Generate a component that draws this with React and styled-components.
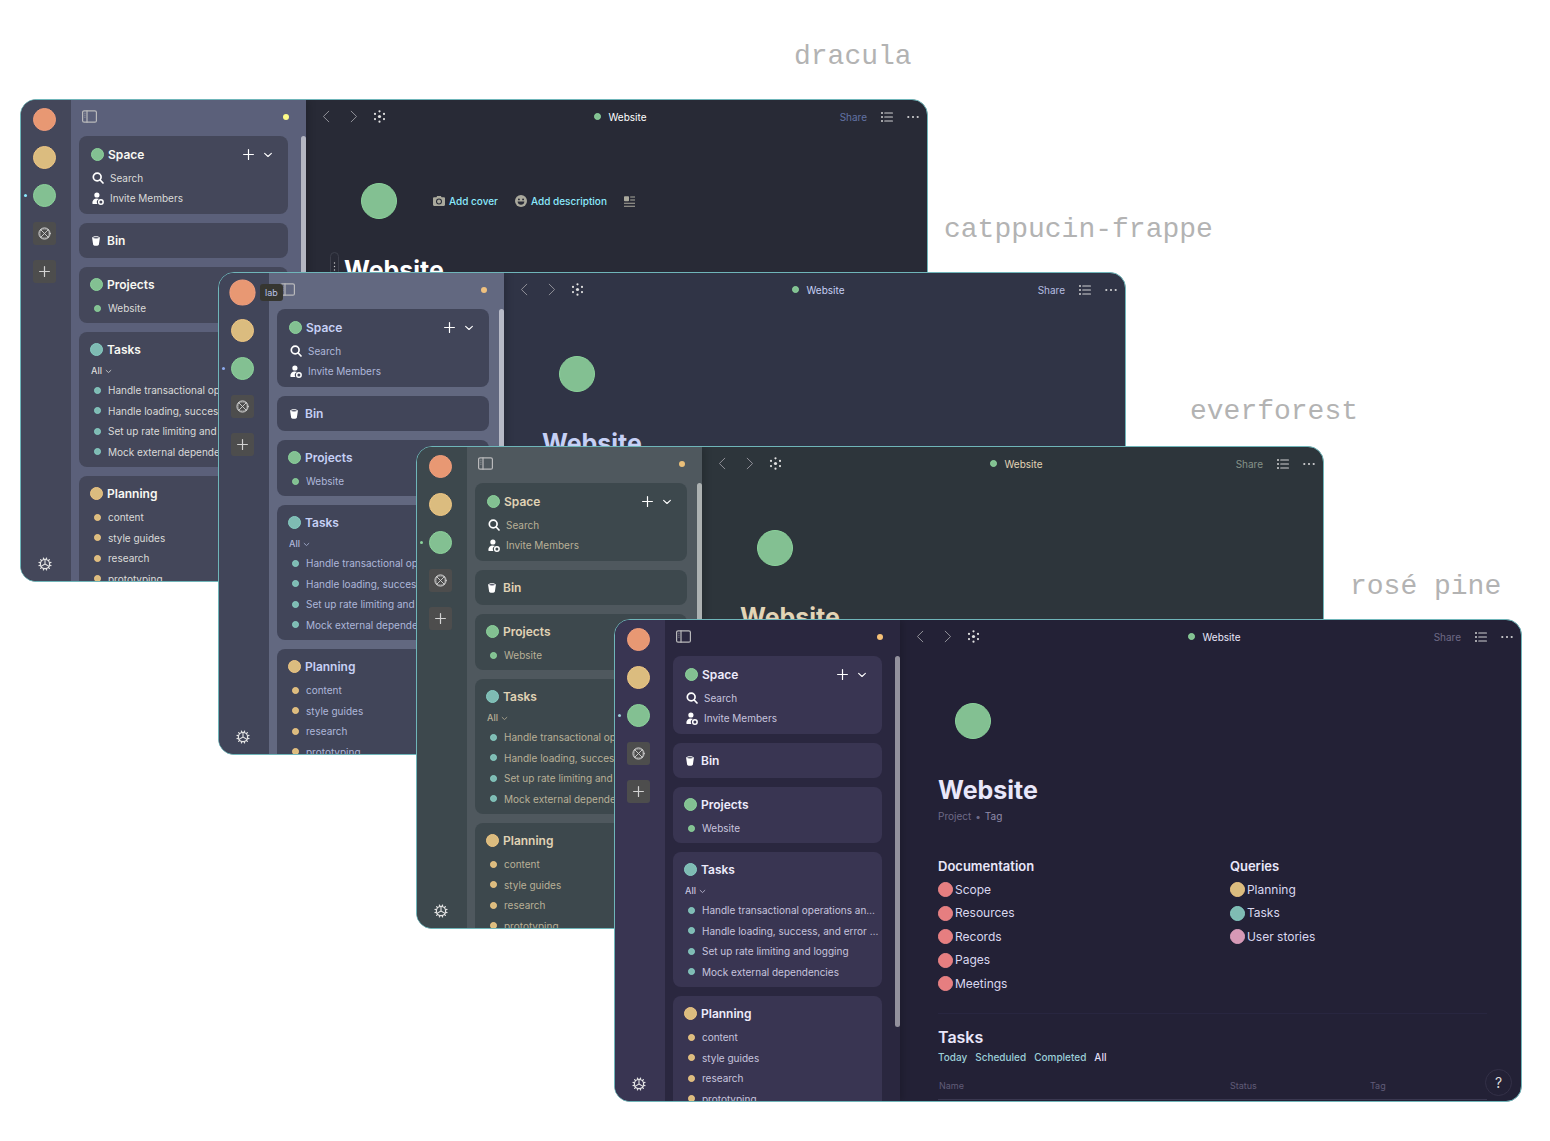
import React from "react";
import styled, { createGlobalStyle, ThemeProvider, css } from "styled-components";

const Global = createGlobalStyle`
  *, *::before, *::after { box-sizing: border-box; }
  body { margin: 0; background: #fff; font-family: Inter, "Liberation Sans", sans-serif; }
  button { font: inherit; color: inherit; background: none; border: 0; padding: 0; cursor: pointer; }
  a { color: inherit; text-decoration: none; }
  h2, h3, ul { margin: 0; padding: 0; }
  ul { list-style: none; }
  svg { display: block; flex: none; }
`;

const hues = {
  orange: ["#e89873", "#f09d7c"],
  yellow: ["#dbbc7f", "#efc683"],
  green: ["#83c092", "#8bd39b"],
  teal: ["#7fbbb3", "#86cdc3"],
  red: ["#e67e80", "#ee8688"],
  pink: ["#d699b6", "#dfa0be"],
};

const themes = {
  dracula: {
    name: "dracula", surface: "#44475a", side: "#5b607a", main: "#282a36", gutter: 18,
    title: "#f8f8f2", text: "#dbdbd9", heading: "#ffffff", share: "#6272a4",
    accent: "#8be9fd", status: "#fdfb88", thumb: "#b4b6c2",
  },
  frappe: {
    name: "catppucin-frappe", surface: "#414559", side: "#626880", main: "#303446", gutter: 15,
    title: "#c6d0f5", text: "#aeb7da", heading: "#c6d0f5", share: "#b5bde0",
    accent: "#8caaee", status: "#efc17f", thumb: "#b7bac7",
  },
  everforest: {
    name: "everforest", surface: "#3d484d", side: "#4f585e", main: "#2d353b", gutter: 15,
    title: "#e0d3b5", text: "#b9b097", heading: "#e2d4b6", share: "#859289",
    accent: "#8bd39b", status: "#eabf79", thumb: "#adb2b2",
  },
  rose: {
    name: "rosé pine", surface: "#393552", side: "#2a273f", main: "#232136", gutter: 18,
    title: "#edebfb", text: "#c7c4de", heading: "#e9e7fa", share: "#6e6a86",
    accent: "#9ccfd8", status: "#f6c177", thumb: "#93919d",
  },
};

const Desktop = styled.main`
  position: relative;
  min-height: 1141px;
  overflow: hidden;
`;

const ThemeName = styled.p`
  position: absolute;
  left: ${(p) => p.$x}px;
  top: ${(p) => p.$y}px;
  margin: 0;
  font: 28px/32px "Liberation Mono", monospace;
  color: #b3b3b3;
`;

const Frame = styled.section`
  position: absolute;
  isolation: isolate;
  left: ${(p) => p.$x}px;
  top: ${(p) => p.$y}px;
  width: calc(100% - 642px);
  height: 483px;
  display: grid;
  grid-template-columns: 50px 235px 1fr;
  overflow: hidden;
  border: 1px solid #6fb5b9;
  border-radius: 16px;
  background: ${(p) => p.theme.main};
  font-size: 10px;
  line-height: 20px;
  color: ${(p) => p.theme.text};
`;

const Disc = styled.span`
  flex: none;
  display: block;
  width: ${(p) => p.$size}px;
  height: ${(p) => p.$size}px;
  border-radius: 50%;
  background: ${(p) => hues[p.$hue][0]};
  border: 1px solid ${(p) => hues[p.$hue][1]};
`;

const Rail = styled.nav`
  display: flex;
  flex-direction: column;
  gap: 15px;
  padding: 8px 0 10px 12px;
  background: ${(p) => p.theme.surface};
`;

const RailItem = styled.button`
  position: relative;
  width: 23px;
  height: 23px;
  display: grid;
  place-items: center;
  border-radius: 3px;
  color: #d2d2d2;
  ${(p) => p.$boxed && css`background: #4d4d4d;`}
  ${(p) => p.$raised && css`${Disc} { transform: scale(1.14); }`}
  ${(p) => p.$active && css`
    &::before {
      content: "";
      position: absolute;
      left: -9px;
      top: 10px;
      width: 3px;
      height: 3px;
      border-radius: 50%;
      background: ${p.theme.accent};
    }
  `}
`;

const RailEnd = styled(RailItem)`
  margin-top: auto;
  height: 14px;
  color: #e4e4e4;
`;

const Tooltip = styled.span`
  position: absolute;
  z-index: 2;
  left: 41px;
  top: 11px;
  padding: 0 5px;
  border-radius: 3px;
  background: #363631;
  color: #b9c2e6;
  font-size: 9px;
  line-height: 17px;
`;

const Side = styled.aside`
  position: relative;
  z-index: 1;
  display: flex;
  flex-direction: column;
  min-height: 0;
  background: ${(p) => p.theme.side};
  box-shadow: 2px 0 8px rgba(0, 0, 0, 0.2);
  clip-path: inset(0 -12px 0 0);
`;

const SideBar = styled.header`
  flex: none;
  display: flex;
  justify-content: space-between;
  align-items: center;
  height: 33px;
  margin-bottom: 3px;
  padding: 0 17px 0 11px;
  color: #b9b9bb;
`;

const Status = styled.span`
  width: 6px;
  height: 6px;
  border-radius: 50%;
  background: ${(p) => p.theme.status};
`;

const Scroller = styled.div`
  position: relative;
  flex: 1;
  min-height: 0;
  overflow: hidden;
  display: flex;
  flex-direction: column;
  gap: 9px;
  padding: 0 ${(p) => p.theme.gutter}px 0 8px;
`;

const Thumb = styled.div`
  position: absolute;
  right: 0;
  top: 0;
  width: 5px;
  height: 371px;
  border-radius: 3px;
  background: ${(p) => p.theme.thumb};
`;

const Card = styled.section`
  flex: none;
  padding: 7px 10px 5px 11px;
  border-radius: 8px;
  background: ${(p) => p.theme.surface};
`;

const SpaceCard = styled(Card)`
  padding: 8px 15px 5px 12px;
`;

const BinCard = styled(Card)`
  padding: 7px 10px 7px 12px;
`;

const CardHead = styled.div`
  display: flex;
  align-items: center;
  height: 21px;
  gap: ${(p) => p.$gap || 4}px;
`;

const CardTitle = styled.h3`
  font-size: 12px;
  line-height: 21px;
  font-weight: 600;
  color: ${(p) => p.theme.title};
`;

const HeadTools = styled.div`
  display: flex;
  align-items: center;
  gap: 9px;
  margin-left: auto;
  color: #fff;
`;

const Filter = styled.button`
  display: flex;
  align-items: center;
  gap: 3px;
  height: 16px;
  margin: 3px 0 1px 1px;
  font-size: 9px;
  font-weight: 500;
  line-height: 16px;
`;

const Items = styled.ul`
  display: grid;
  grid-auto-rows: 20px 21px;
  margin-top: ${(p) => (p.$flush ? 0 : 3)}px;
`;

const Item = styled.li`
  display: flex;
  align-items: center;
  gap: 7px;
  padding-left: 4px;
  white-space: nowrap;
`;

const Action = styled.button`
  display: flex;
  align-items: center;
  gap: 6px;
  padding-left: 1px;
  svg { color: #fff; }
`;

const Main = styled.div`
  min-width: 0;
  display: flex;
  flex-direction: column;
`;

const TopBar = styled.header`
  display: grid;
  grid-template-columns: 1fr auto 1fr;
  align-items: center;
  height: 33px;
  padding: 0 8px 0 16px;
`;

const NavTools = styled.div`
  display: flex;
  align-items: center;
  gap: 20px;
  color: #8f8f97;
  button:last-child { color: #e2e2e2; margin-left: -5px; }
`;

const Crumb = styled.a`
  display: flex;
  align-items: center;
  gap: 7px;
  color: ${(p) => p.theme.heading};
`;

const PageTools = styled.div`
  display: flex;
  justify-content: flex-end;
  align-items: center;
  gap: 14px;
  color: #d0d0d2;
`;

const Share = styled.button`
  color: ${(p) => p.theme.share};
`;

const Page = styled.article`
  padding: 50px 34px 0 38px;
`;

const IconRow = styled.div`
  display: flex;
  align-items: center;
  height: 36px;
  padding-left: 17px;
  color: #aaa99d;
`;

const CoverTools = styled.div`
  display: flex;
  align-items: center;
  gap: 17px;
  margin-left: 36px;
`;

const CoverButton = styled.button`
  display: flex;
  align-items: center;
  gap: 4px;
  font-weight: 500;
  span { color: ${(p) => p.theme.accent}; }
`;

const TitleRow = styled.div`
  position: relative;
  margin-top: 35px;
`;

const Grip = styled.button`
  position: absolute;
  left: -14px;
  top: -2px;
  width: 9px;
  height: 32px;
  display: grid;
  place-items: center;
  border: 1px solid #3d3f4b;
  border-radius: 5px;
  color: #c8c8c8;
`;

const Title = styled.h2`
  font-size: 25px;
  line-height: 32px;
  font-weight: 700;
  color: ${(p) => p.theme.heading};
`;

const Meta = styled.p`
  display: flex;
  gap: 4px;
  margin: 2px 0 32px;
  line-height: 16px;
  color: #6e6a86;
  a { color: #908caa; }
`;

const Columns = styled.div`
  display: grid;
  grid-template-columns: 53fr 47fr;
  column-gap: 2px;
  padding-bottom: 18px;
  border-bottom: 1px solid #282640;
`;

const ColumnTitle = styled.h3`
  margin-bottom: 2px;
  font-size: 13px;
  line-height: 20px;
  font-weight: 600;
  color: ${(p) => p.theme.heading};
`;

const Links = styled.ul`
  display: grid;
  grid-auto-rows: 23px 24px;
`;

const PageLink = styled.a`
  display: flex;
  align-items: center;
  gap: 2px;
  height: 100%;
  font-size: 12px;
  color: #dad8ef;
`;

const SectionTitle = styled.h3`
  margin-top: 12px;
  font-size: 16px;
  line-height: 22px;
  font-weight: 600;
  color: ${(p) => p.theme.heading};
`;

const Tabs = styled.div`
  display: flex;
  gap: 8px;
  margin: 1px 0 8px;
  line-height: 16px;
`;

const Tab = styled.button`
  font-weight: 500;
  color: ${(p) => (p.$current ? "#e0def4" : p.theme.accent)};
`;

const Table = styled.table`
  width: 100%;
  table-layout: fixed;
  border-collapse: collapse;
  th {
    height: 26px;
    padding: 0 0 0 1px;
    border-bottom: 1px solid #3a3850;
    text-align: left;
    font-size: 9px;
    font-weight: 400;
    line-height: 24px;
    color: #605c78;
  }
  th:nth-child(1) { width: 53%; }
  th:nth-child(2) { width: 140px; }
`;

const Help = styled.button`
  position: absolute;
  right: 9px;
  bottom: 5px;
  width: 27px;
  height: 27px;
  border: 1px solid #343148;
  border-radius: 50%;
  font-size: 14px;
  color: #dcdcdc;
`;

const stroke = { fill: "none", stroke: "currentColor", strokeLinecap: "round", strokeLinejoin: "round" };

const PanelIcon = () => (
  <svg width="15" height="13" viewBox="0 0 15 13" {...stroke} strokeWidth="1.2">
    <rect x="0.6" y="0.8" width="13.8" height="11.4" rx="1.5" />
    <path d="M5 0.8v11.4" />
    <path d="M2.3 3.2h1M2.3 5.2h1M2.3 7.2h1" strokeWidth=".5" />
  </svg>
);
const PlusIcon = ({ size = 11 }) => (
  <svg width={size} height={size} viewBox="0 0 11 11" {...stroke} strokeWidth="1.2"><path d="M5.5 .6v9.8M.6 5.5h9.8" /></svg>
);
const ChevronIcon = ({ size = 8 }) => (
  <svg width={size} height={size} viewBox="0 0 8 8" {...stroke} strokeWidth=".9"><path d="M1.3 2.7 4 5.2 6.7 2.7" /></svg>
);
const GraphIcon = () => (
  <svg width="13" height="13" viewBox="0 0 13 13" {...stroke} strokeWidth="1">
    <circle cx="6.5" cy="6.5" r="5.6" />
    <path d="M2.6 2.6l7.8 7.8M10.4 2.6l-7.8 7.8" strokeWidth=".9" />
    <path d="M2.6 2.6C5 1.8 8 1.8 10.4 2.6C11.2 5 11.2 8 10.4 10.4C8 11.2 5 11.2 2.6 10.4C1.8 8 1.8 5 2.6 2.6" strokeWidth=".6" />
  </svg>
);
const GearIcon = () => (
  <svg width="14" height="14" viewBox="0 0 14 14" {...stroke}>
    <circle cx="7" cy="7" r="4.6" strokeWidth="1.2" />
    <path d="M7 7V2.4M7 7l-4 2.4M7 7l4 2.4" strokeWidth="1.1" />
    {Array.from({ length: 12 }, (_, i) => (
      <path key={i} d="M7 .8v1.2" strokeWidth="1.2" transform={`rotate(${i * 30 + 15} 7 7)`} />
    ))}
  </svg>
);
const SearchIcon = () => (
  <svg width="12" height="12" viewBox="0 0 12 12" {...stroke} strokeWidth="1.7"><circle cx="5.2" cy="5" r="3.9" /><path d="M8.2 8 11 11" /></svg>
);
const InviteIcon = () => (
  <svg width="12" height="13" viewBox="0 0 12 13" fill="currentColor">
    <circle cx="4.9" cy="3" r="2.6" />
    <path d="M.3 11.2c0-2.8 1.8-4.6 4.5-4.6.9 0 1.6.2 2.2.5A3.6 3.6 0 0 0 5.3 12H1.2c-.6 0-.9-.3-.9-.8z" />
    <path fillRule="evenodd" d="M8.9 6.900a3 3 0 1 1 0 6 3 3 0 0 1 0-6zm0 1.500a1.500 1.500 0 1 0 0 3 1.500 1.500 0 0 0 0-3z" />
  </svg>
);
const BinIcon = () => (
  <svg width="8" height="10" viewBox="0 0 8 10">
    <path d="M.1 1.700C.1.800 1.900.2 4 .2s3.900.6 3.900 1.500L6.900 8.500c-.1.800-1.300 1.300-2.900 1.300s-2.800-.5-2.900-1.300z" fill="#fff" />
    <ellipse cx="4" cy="1.800" rx="2.900" ry=".8" fill="#55586a" />
  </svg>
);
const ArrowIcon = ({ flip }) => (
  <svg width="8" height="13" viewBox="0 0 8 13" {...stroke} strokeWidth="1"><path d={flip ? "M1.2 1.2 6.6 6.5 1.2 11.8" : "M6.8 1.2 1.4 6.5 6.8 11.8"} /></svg>
);
const DotsIcon = () => (
  <svg width="13" height="13" viewBox="0 0 13 13" fill="currentColor">
    {[[6.5, 1.3], [6.5, 11.7], [2, 3.9], [11, 3.9], [2, 9.1], [11, 9.1]].map(([x, y]) => <circle key={`${x}-${y}`} cx={x} cy={y} r="1.1" />)}
    <circle cx="6.5" cy="6.5" r="1.6" />
  </svg>
);
const ListIcon = () => (
  <svg width="12" height="10" viewBox="0 0 12 10" fill="currentColor">
    {[1, 5, 9].map((y) => <g key={y}><circle cx="1" cy={y} r="1" /><rect x="3.2" y={y - 0.55} width="8.8" height="1.1" rx=".5" /></g>)}
  </svg>
);
const MoreIcon = () => (
  <svg width="12" height="4" viewBox="0 0 12 4" fill="currentColor">{[1.3, 6, 10.7].map((x) => <circle key={x} cx={x} cy="2" r="1.1" />)}</svg>
);
const CameraIcon = () => (
  <svg width="12" height="12" viewBox="0 0 12 12" fill="currentColor">
    <path fillRule="evenodd" d="M1.2 2.2h2.2l.8-1.2h3.6l.8 1.2h2.2c.7 0 1.2.5 1.2 1.1v6.5c0 .7-.5 1.2-1.2 1.2H1.2C.5 11 0 10.5 0 9.8V3.3c0-.6.5-1.1 1.2-1.1zM6 3.5a3 3 0 1 0 0 6 3 3 0 0 0 0-6z" />
    <circle cx="6" cy="6.5" r="1.9" />
  </svg>
);
const SmileIcon = () => (
  <svg width="12" height="12" viewBox="0 0 12 12">
    <circle cx="6" cy="6" r="6" fill="currentColor" />
    <g fill="#282a36"><circle cx="3.9" cy="4.4" r=".95" /><circle cx="8.1" cy="4.4" r=".95" /><path d="M2.6 6.5h6.8C9.2 8.6 7.8 9.7 6 9.7S2.8 8.6 2.6 6.5z" /></g>
  </svg>
);
const LayoutIcon = () => (
  <svg width="11" height="11" viewBox="0 0 11 11" fill="currentColor">
    <rect width="5" height="5" rx=".8" y=".3" /><path d="M6.2 .6h4.8v1H6.2zM6.2 3.6h4.8v1H6.2zM0 6.8h11v1H0zM0 9.8h11v1H0z" />
  </svg>
);
const GripIcon = () => (
  <svg width="3" height="13" viewBox="0 0 3 13" fill="currentColor">{[1, 4.5, 8, 11.5].map((y) => <circle key={y} cx="1.5" cy={y} r=".7" />)}</svg>
);

const groups = [
  { title: "Projects", hue: "green", items: ["Website"] },
  {
    title: "Tasks", hue: "teal", filter: "All",
    items: ["Handle transactional operations an…", "Handle loading, success, and error …", "Set up rate limiting and logging", "Mock external dependencies"],
  },
  { title: "Planning", hue: "yellow", items: ["content", "style guides", "research", "prototyping"] },
];

function Sidebar() {
  return (
    <Side>
      <SideBar>
        <button aria-label="Toggle sidebar"><PanelIcon /></button>
        <Status />
      </SideBar>
      <Scroller>
        <SpaceCard>
          <CardHead>
            <Disc $size={13} $hue="green" />
            <CardTitle>Space</CardTitle>
            <HeadTools>
              <button aria-label="New"><PlusIcon /></button>
              <button aria-label="More"><ChevronIcon size={10} /></button>
            </HeadTools>
          </CardHead>
          <Items>
            <li><Action><SearchIcon />Search</Action></li>
            <li><Action><InviteIcon />Invite Members</Action></li>
          </Items>
        </SpaceCard>
        <BinCard>
          <CardHead $gap={7}>
            <Action aria-label="Open bin"><BinIcon /></Action>
            <CardTitle>Bin</CardTitle>
          </CardHead>
        </BinCard>
        {groups.map((g) => (
          <Card key={g.title}>
            <CardHead>
              <Disc $size={13} $hue={g.hue} />
              <CardTitle>{g.title}</CardTitle>
            </CardHead>
            {g.filter && <Filter>{g.filter}<ChevronIcon size={7} /></Filter>}
            <Items $flush={Boolean(g.filter)}>
              {g.items.map((text) => (
                <Item key={text}><Disc $size={7} $hue={g.hue} /><a href="#page">{text}</a></Item>
              ))}
            </Items>
          </Card>
        ))}
        <Thumb />
      </Scroller>
    </Side>
  );
}

function LinkColumn({ title, links }) {
  return (
    <div>
      <ColumnTitle>{title}</ColumnTitle>
      <Links>
        {links.map(([text, hue]) => (
          <li key={text}><PageLink href="#page"><Disc $size={15} $hue={hue} />{text}</PageLink></li>
        ))}
      </Links>
    </div>
  );
}

function Details() {
  return (
    <>
      <Meta>Project <span>•</span> <a href="#tag">Tag</a></Meta>
      <Columns>
        <LinkColumn title="Documentation" links={["Scope", "Resources", "Records", "Pages", "Meetings"].map((t) => [t, "red"])} />
        <LinkColumn title="Queries" links={[["Planning", "yellow"], ["Tasks", "teal"], ["User stories", "pink"]]} />
      </Columns>
      <SectionTitle>Tasks</SectionTitle>
      <Tabs>
        {["Today", "Scheduled", "Completed", "All"].map((t) => <Tab key={t} $current={t === "All"}>{t}</Tab>)}
      </Tabs>
      <Table>
        <thead><tr><th>Name</th><th>Status</th><th>Tag</th></tr></thead>
      </Table>
    </>
  );
}

function AppWindow({ theme, x, y, tooltip, editing, details }) {
  return (
    <ThemeProvider theme={theme}>
      <Frame $x={x} $y={y} aria-label={theme.name}>
        <Rail>
          <RailItem $raised={Boolean(tooltip)} aria-label="lab">
            <Disc $size={23} $hue="orange" />
          </RailItem>
          <RailItem aria-label="Notes"><Disc $size={23} $hue="yellow" /></RailItem>
          <RailItem $active aria-label="Space"><Disc $size={23} $hue="green" /></RailItem>
          <RailItem $boxed aria-label="Graph"><GraphIcon /></RailItem>
          <RailItem $boxed aria-label="Add space"><PlusIcon size={11} /></RailItem>
          <RailEnd aria-label="Settings"><GearIcon /></RailEnd>
        </Rail>
        <Sidebar />
        <Main>
          <TopBar>
            <NavTools>
              <button aria-label="Back"><ArrowIcon /></button>
              <button aria-label="Forward"><ArrowIcon flip /></button>
              <button aria-label="Graph"><DotsIcon /></button>
            </NavTools>
            <Crumb href="#page"><Disc $size={7} $hue="green" />Website</Crumb>
            <PageTools>
              <Share>Share</Share>
              <button aria-label="Outline"><ListIcon /></button>
              <button aria-label="Options"><MoreIcon /></button>
            </PageTools>
          </TopBar>
          <Page>
            <IconRow>
              <Disc $size={36} $hue="green" />
              {editing && (
                <CoverTools>
                  <CoverButton><CameraIcon /><span>Add cover</span></CoverButton>
                  <CoverButton><SmileIcon /><span>Add description</span></CoverButton>
                  <CoverButton aria-label="Layout"><LayoutIcon /></CoverButton>
                </CoverTools>
              )}
            </IconRow>
            <TitleRow>
              {editing && <Grip aria-label="Move"><GripIcon /></Grip>}
              <Title>Website</Title>
            </TitleRow>
            {details && <Details />}
          </Page>
        </Main>
        {tooltip && <Tooltip role="tooltip">{tooltip}</Tooltip>}
        {details && <Help aria-label="Help">?</Help>}
      </Frame>
    </ThemeProvider>
  );
}

export default function App() {
  return (
    <Desktop>
      <Global />
      <ThemeName $x={794} $y={41}>dracula</ThemeName>
      <ThemeName $x={944} $y={214}>catppucin-frappe</ThemeName>
      <ThemeName $x={1190} $y={396}>everforest</ThemeName>
      <ThemeName $x={1350} $y={571}>rosé pine</ThemeName>
      <AppWindow theme={themes.dracula} x={20} y={99} editing />
      <AppWindow theme={themes.frappe} x={218} y={272} tooltip="lab" />
      <AppWindow theme={themes.everforest} x={416} y={446} />
      <AppWindow theme={themes.rose} x={614} y={619} details />
    </Desktop>
  );
}
